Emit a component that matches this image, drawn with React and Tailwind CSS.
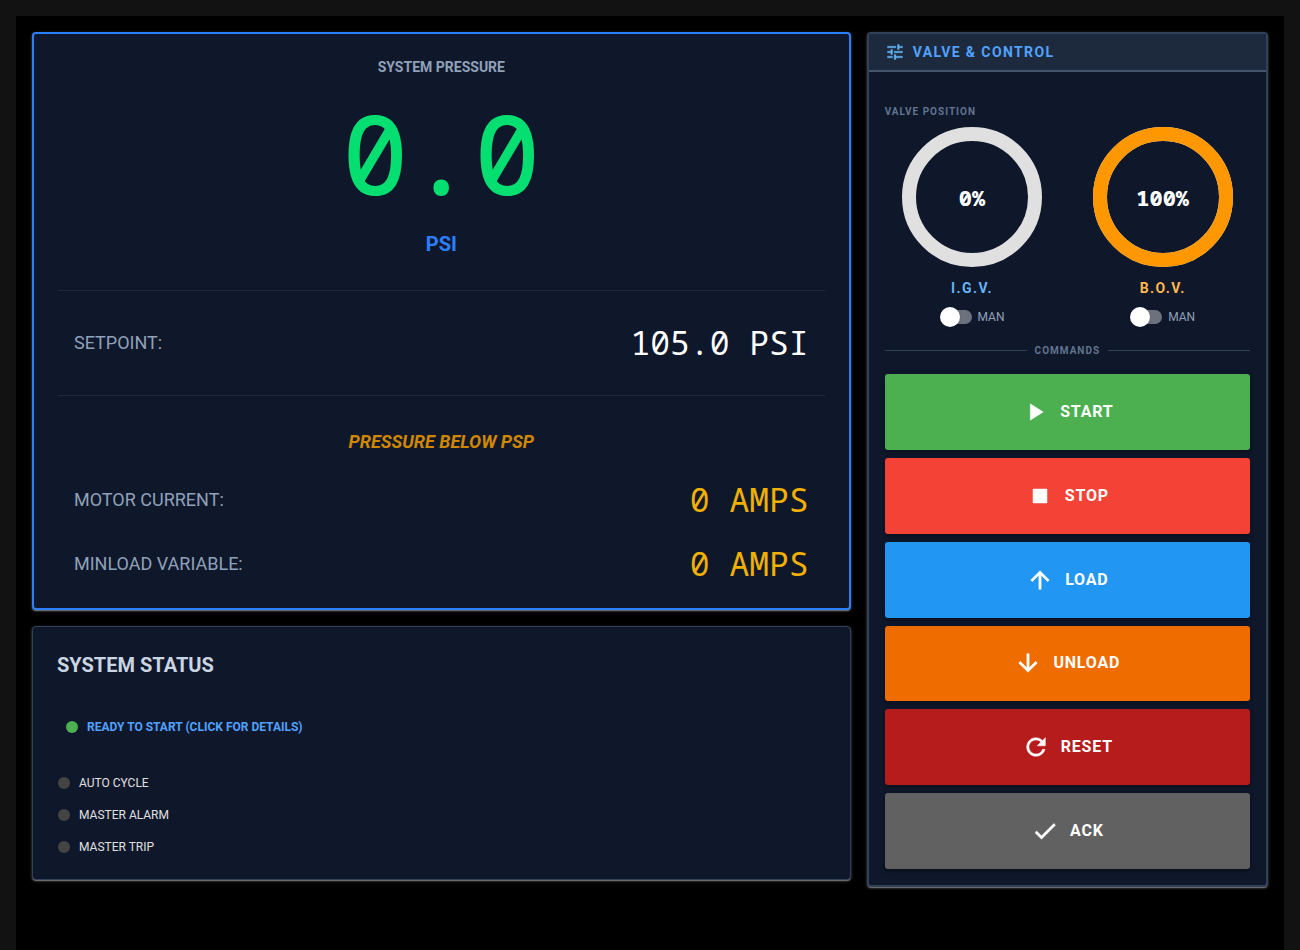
import { useState } from 'react';
import {
  MdArrowDownward,
  MdArrowUpward,
  MdCheck,
  MdPlayArrow,
  MdRefresh,
  MdStop,
  MdTune,
} from 'react-icons/md';

const COMMANDS = [
  { label: 'START', Icon: MdPlayArrow, color: 'bg-[#4caf50]' },
  { label: 'STOP', Icon: MdStop, color: 'bg-[#f44336]' },
  { label: 'LOAD', Icon: MdArrowUpward, color: 'bg-[#2196f3]' },
  { label: 'UNLOAD', Icon: MdArrowDownward, color: 'bg-[#ef6c00]' },
  { label: 'RESET', Icon: MdRefresh, color: 'bg-[#b71c1c]' },
  { label: 'ACK', Icon: MdCheck, color: 'bg-[#616161]' },
];

const INDICATORS = ['AUTO CYCLE', 'MASTER ALARM', 'MASTER TRIP'];

const PANEL =
  'rounded-sm bg-slate-900 shadow-[0_2px_1px_-1px_rgba(255,255,255,0.2),0_1px_1px_0_rgba(255,255,255,0.14),0_1px_3px_0_rgba(255,255,255,0.3)]';
const MONO = "font-['Noto_Sans_Mono','DejaVu_Sans_Mono',monospace]";

function Reading({ label, value, color }) {
  return (
    <div className="flex h-10 items-center justify-between px-4">
      <span className="text-lg text-slate-400">{label}</span>
      <span className={`${MONO} text-[33px] leading-10 ${color}`}>{value}</span>
    </div>
  );
}

function PressurePanel() {
  return (
    <section className={`${PANEL} border-2 border-blue-500 p-6`}>
      <h2 className="text-center text-sm leading-[18px] font-bold text-slate-400">SYSTEM PRESSURE</h2>
      <p className={`${MONO} mt-4 text-center text-[110px] leading-[120px] font-medium text-green-400`}>0.0</p>
      <p className="mt-[18px] mb-8 text-center text-xl leading-7 font-bold text-blue-500">PSI</p>
      <div className="border-y border-slate-800 py-8">
        <Reading label="SETPOINT:" value="105.0 PSI" color="text-white" />
      </div>
      <div className="mt-8 flex flex-col gap-6">
        <p className="text-center text-lg leading-7 font-bold text-yellow-600 italic">
          PRESSURE BELOW PSP
        </p>
        <Reading label="MOTOR CURRENT:" value="0 AMPS" color="text-yellow-500" />
        <Reading label="MINLOAD VARIABLE:" value="0 AMPS" color="text-yellow-500" />
      </div>
    </section>
  );
}

function Dot({ color }) {
  return <span className={`mx-px size-3 rounded-full ${color}`} />;
}

function StatusPanel() {
  return (
    <section className={`${PANEL} border border-slate-700 p-6`}>
      <h2 className="text-xl leading-7 font-bold text-slate-300">SYSTEM STATUS</h2>
      <button
        type="button"
        className="mt-8 flex h-8 items-center gap-2 px-2 text-xs font-bold text-blue-400"
      >
        <Dot color="bg-[#4caf50]" />
        READY TO START (CLICK FOR DETAILS)
      </button>
      <ul className="mt-8 flex flex-col gap-4">
        {INDICATORS.map((name) => (
          <li key={name} className="flex items-center gap-2 text-xs text-[#e0e0e0]">
            <Dot color="bg-[#444444]" />
            {name}
          </li>
        ))}
      </ul>
    </section>
  );
}

function Gauge({ name, value, track, fill, nameColor }) {
  const [auto, setAuto] = useState(false);
  const length = 2 * Math.PI * 63;
  return (
    <div className="flex flex-col items-center">
      <div className="grid size-[140px] place-items-center">
        <svg viewBox="0 0 140 140" className="col-start-1 row-start-1 size-full -rotate-90" aria-hidden="true">
          <circle cx="70" cy="70" r="63" fill="none" stroke={track} strokeWidth="14" />
          {value > 0 && (
            <circle
              cx="70"
              cy="70"
              r="63"
              fill="none"
              stroke={fill}
              strokeWidth="14"
              strokeDasharray={`${(length * value) / 100} ${length}`}
            />
          )}
        </svg>
        <span className={`${MONO} col-start-1 row-start-1 text-[22px] font-extrabold text-white`}>{value}%</span>
      </div>
      <h3 className={`mt-3 text-sm leading-[18px] font-bold tracking-[1.4px] ${nameColor}`}>{name}</h3>
      <label className="mt-2.5 flex h-5 items-center gap-1.5 text-xs text-slate-400">
        <span className="grid h-5 w-8 items-center">
          <input
            type="checkbox"
            role="switch"
            checked={auto}
            onChange={(e) => setAuto(e.target.checked)}
            className="peer col-start-1 row-start-1 ml-1 h-3.5 w-7 appearance-none rounded-full bg-[#6d717d] checked:bg-[#64b5f6]"
          />
          <span className="pointer-events-none col-start-1 row-start-1 size-5 rounded-full bg-white shadow-sm peer-checked:justify-self-end" />
        </span>
        {auto ? 'AUTO' : 'MAN'}
      </label>
    </div>
  );
}

function ControlPanel() {
  return (
    <section className={`${PANEL} border-2 border-slate-700`}>
      <header className="flex items-center gap-2 border-b-2 border-slate-600 bg-slate-800 px-4 py-2">
        <MdTune className="size-5 text-[#64b5f6] [&>path:last-child]:[stroke-width:0.4]" aria-hidden="true" />
        <h2 className="text-sm leading-5 font-bold tracking-[1.4px] text-blue-400">VALVE &amp; CONTROL</h2>
      </header>
      <div className="px-4 pt-8 pb-4">
        <h3 className="mb-2 text-[10px] leading-[15px] font-bold tracking-[1px] text-slate-500">
          VALVE POSITION
        </h3>
        <div className="grid grid-cols-2 gap-4">
          <Gauge name="I.G.V." value={0} track="#e0e0e0" fill="#2196f3" nameColor="text-[#64b5f6]" />
          <Gauge name="B.O.V." value={100} track="#e0e0e0" fill="#ff9800" nameColor="text-[#ffb74d]" />
        </div>
        <div className="mt-4 mb-4 flex items-center gap-2">
          <span className="h-px flex-1 bg-slate-700" />
          <h3 className="text-[10px] leading-[15px] font-bold tracking-[1px] text-slate-500">COMMANDS</h3>
          <span className="h-px flex-1 bg-slate-700" />
        </div>
        <div className="grid h-[495px] grid-rows-6 gap-2">
          {COMMANDS.map(({ label, Icon, color }) => (
            <button
              key={label}
              type="button"
              className={`${color} flex items-center justify-center gap-[11px] rounded-[3px] text-base font-bold tracking-[0.8px] text-white shadow-[0_2px_4px_rgba(0,0,0,0.4)]`}
            >
              <Icon className="size-7 [&>path:last-child]:[stroke-width:0.4]" aria-hidden="true" />
              {label}
            </button>
          ))}
        </div>
      </div>
    </section>
  );
}

export default function App() {
  return (
    <div className="flex min-h-screen flex-col bg-[#121212] px-4 pt-4 font-[Roboto,sans-serif]">
      <main className="grid flex-1 grid-cols-3 items-start gap-4 bg-black p-4">
        <div className="col-span-2 flex flex-col gap-4">
          <PressurePanel />
          <StatusPanel />
        </div>
        <ControlPanel />
      </main>
    </div>
  );
}
